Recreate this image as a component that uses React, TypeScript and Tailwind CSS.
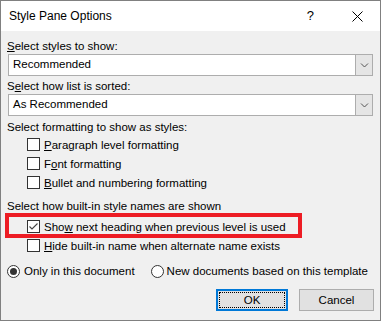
import React from "react";

const font = { fontFamily: '"Liberation Sans", Arial, sans-serif' };

function Check({ checked = false }: { checked?: boolean }) {
  return (
    <div className="w-[13px] h-[13px] border border-[#333333] bg-white shrink-0 flex items-center justify-center">
      {checked && (
        <svg width="11" height="11" viewBox="0 0 11 11">
          <path d="M1.5 5.5 L4 8 L9.5 2.5" fill="none" stroke="#444444" strokeWidth="1.1" />
        </svg>
      )}
    </div>
  );
}

function Radio({ checked = false }: { checked?: boolean }) {
  return (
    <div className="w-[13px] h-[13px] rounded-full border border-[#333333] bg-white shrink-0 flex items-center justify-center">
      {checked && <div className="w-[7px] h-[7px] rounded-full bg-[#333333]" />}
    </div>
  );
}

function Combo({ value }: { value: string }) {
  return (
    <div className="mx-[7px] h-[22px] border border-[#adadad] bg-white flex items-stretch">
      <div className="flex-1 pl-[4px] flex items-center text-black">{value}</div>
      <div className="w-[17px] bg-[#e5e5e5] border-l border-[#adadad] flex items-center justify-center">
        <svg width="9" height="6" viewBox="0 0 9 6">
          <path d="M1 1.5 L4.5 5 L8 1.5" fill="none" stroke="#555555" strokeWidth="1" />
        </svg>
      </div>
    </div>
  );
}

function CheckRow({ checked, children }: { checked?: boolean; children: React.ReactNode }) {
  return (
    <div className="flex items-center h-[19px] pl-[26px] gap-[4px]">
      <Check checked={checked} />
      <span className="leading-[16px] whitespace-nowrap">{children}</span>
    </div>
  );
}

export default function App() {
  return (
    <div
      className="w-[381px] h-[321px] border border-[#808080] bg-[#f0f0f0] text-[11.5px] text-black flex flex-col relative overflow-hidden whitespace-nowrap"
      style={font}
    >
      <div className="h-[30px] bg-white flex items-center pl-[8px] shrink-0 text-[12px]">
        <span className="flex-1 leading-[16px]">Style Pane Options</span>
        <span className="mr-[38px] text-[13px] leading-[16px]">?</span>
        <svg width="11" height="11" viewBox="0 0 11 11" className="mr-[17px]">
          <path d="M0.5 0.5 L10.5 10.5 M10.5 0.5 L0.5 10.5" stroke="#000" strokeWidth="1" />
        </svg>
      </div>

      <div className="pt-[7px] pl-[6px] leading-[16px]">
        <span className="underline">S</span>elect styles to show:
      </div>
      <div>
        <Combo value="Recommended" />
      </div>

      <div className="pt-[2px] pl-[6px] leading-[16px]">
        S<span className="underline">e</span>lect how list is sorted:
      </div>
      <div>
        <Combo value="As Recommended" />
      </div>

      <div className="pt-[3px] pl-[6px] leading-[16px]">Select formatting to show as styles:</div>
      <div>
        <CheckRow>
          <span className="underline">P</span>aragraph level formatting
        </CheckRow>
        <CheckRow>
          F<span className="underline">o</span>nt formatting
        </CheckRow>
        <CheckRow>
          <span className="underline">B</span>ullet and numbering formatting
        </CheckRow>
      </div>

      <div className="pt-[6px] pl-[6px] leading-[16px]">Select how built-in style names are shown</div>
      <div className="pt-[3px]">
        <CheckRow checked>
          Sho<span className="underline">w</span> next heading when previous level is used
        </CheckRow>
        <CheckRow>
          <span className="underline">H</span>ide built-in name when alternate name exists
        </CheckRow>
      </div>

      <div className="mt-[7px] flex items-center pl-[6px] h-[18px]">
        <Radio checked />
        <span className="ml-[4px] leading-[16px]">Only in this document</span>
        <span className="ml-[16px]"><Radio /></span>
        <span className="ml-[3px] leading-[16px]">New documents based on this template</span>
      </div>

      <div className="mt-[9px] flex justify-end gap-[11px] pr-[6px]">
        <div className="w-[72px] h-[22px] border-2 border-[#0078d7] bg-[#e1e1e1] p-[1px]">
          <div className="w-full h-full border border-dotted border-black flex items-center justify-center leading-[16px]">
            OK
          </div>
        </div>
        <div className="w-[75px] h-[22px] border border-[#adadad] bg-[#e1e1e1] flex items-center justify-center leading-[16px]">
          Cancel
        </div>
      </div>

      <div className="absolute left-[4px] top-[212px] w-[297px] h-[25px] border-[4px] border-[#ed1c24] pointer-events-none" />
    </div>
  );
}
